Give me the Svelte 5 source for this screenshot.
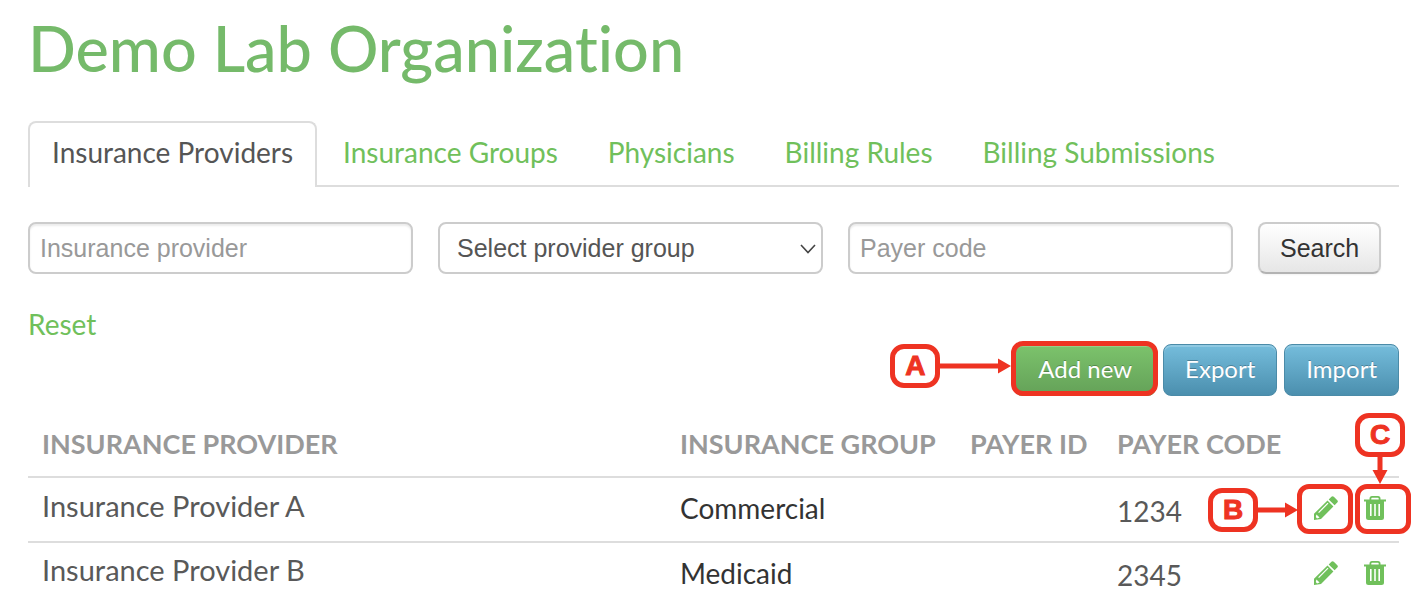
<script lang="ts">
  interface Provider {
    name: string;
    group: string;
    payerId: string;
    payerCode: string;
  }

  const tabs = [
    "Insurance Providers",
    "Insurance Groups",
    "Physicians",
    "Billing Rules",
    "Billing Submissions",
  ];

  const providers: Provider[] = [
    { name: "Insurance Provider A", group: "Commercial", payerId: "", payerCode: "1234" },
    { name: "Insurance Provider B", group: "Medicaid", payerId: "", payerCode: "2345" },
  ];

  let activeTab = $state(0);
  let providerName = $state("");
  let providerGroup = $state("");
  let payerCode = $state("");

  function reset(event: MouseEvent) {
    event.preventDefault();
    providerName = "";
    providerGroup = "";
    payerCode = "";
  }
</script>

{#snippet arrowRight(length: number)}
  <svg class="arrow" width={length} height="16" viewBox="0 0 {length} 16" aria-hidden="true">
    <path d="M0 5.5H{length - 13}V0.5L{length} 8L{length - 13} 15.5V10.5H0Z" fill="#ee3322" />
  </svg>
{/snippet}

<main>
  <h1>Demo Lab Organization</h1>

  <nav>
    {#each tabs as tab, i}
      <a
        href="#tab-{i}"
        class:active={i === activeTab}
        onclick={() => (activeTab = i)}>{tab}</a>
    {/each}
  </nav>

  <form class="filters" onsubmit={(e) => e.preventDefault()}>
    <input
      type="text"
      aria-label="Insurance provider"
      placeholder="Insurance provider"
      bind:value={providerName}
    />
    <div class="select-wrapper">
      <select aria-label="Provider group" bind:value={providerGroup}>
        <option value="">Select provider group</option>
        <option value="commercial">Commercial</option>
        <option value="medicaid">Medicaid</option>
      </select>
      <svg class="chevron" width="16" height="10" viewBox="0 0 16 10" aria-hidden="true">
        <path d="M1 1L8 8.5L15 1" fill="none" stroke="#444" stroke-width="1.6" />
      </svg>
    </div>
    <input
      type="text"
      aria-label="Payer code"
      placeholder="Payer code"
      bind:value={payerCode}
    />
    <button type="submit" class="btn">Search</button>
  </form>

  <a class="reset" href="#reset" onclick={reset}>Reset</a>

  <div class="actions">
    <div class="marked">
      <button type="button" class="btn success">Add new</button>
      <div class="frame frame-add"></div>
      <div class="callout callout-a">
        <span class="badge">A</span>
        {@render arrowRight(71)}
      </div>
    </div>
    <button type="button" class="btn info">Export</button>
    <button type="button" class="btn info">Import</button>
  </div>

  <table>
    <thead>
      <tr>
        <th>Insurance Provider</th>
        <th class="col-group">Insurance Group</th>
        <th class="col-id">Payer ID</th>
        <th class="col-code">Payer Code</th>
        <th class="col-tools" aria-label="Actions"></th>
      </tr>
    </thead>
    <tbody>
      {#each providers as provider, i}
        <tr>
          <td class="name">{provider.name}</td>
          <td>{provider.group}</td>
          <td>{provider.payerId}</td>
          <td class="code">{provider.payerCode}</td>
          <td>
            <div class="tools">
              <button type="button" class="icon" aria-label="Edit {provider.name}">
                <svg width="24" height="24" viewBox="0 0 24 24">
                  <path
                    fill="#70c05b"
                    d="M17.4 0.7Q18.6-0.4 19.8 0.7L23.3 4.2Q24.4 5.4 23.3 6.6L20.6 9.3L14.7 3.4Z M13.5 4.6L19.4 10.5L7 23L0 24V17.8Z"
                  />
                  <path d="M4.6 16.6L14 7.2" stroke="#fff" stroke-width="1.2" />
                  <path d="M2.4 18.6L4 20L5.6 21.6L3 22.4L1.8 21Z" fill="#fff" />
                </svg>
              </button>
              <button type="button" class="icon" aria-label="Delete {provider.name}">
                <svg width="22" height="24" viewBox="0 0 22 24">
                  <path
                    fill="#70c05b"
                    fill-rule="evenodd"
                    d="M5.5 3.5V2.5Q5.5 0 8 0H14Q16.5 0 16.5 2.5V3.5H22V5.5H20V21.5Q20 24 17.5 24H4.5Q2 24 2 21.5V5.5H0V3.5ZM7.3 3.5H14.7V2.6Q14.7 1.8 13.9 1.8H8.1Q7.3 1.8 7.3 2.6ZM6 8V20H7.6V8ZM10.2 8V20H11.8V8ZM14.4 8V20H16V8Z"
                  />
                </svg>
              </button>
              {#if i === 0}
                <div class="frame frame-edit"></div>
                <div class="frame frame-delete"></div>
                <div class="callout callout-b">
                  <span class="badge">B</span>
                  {@render arrowRight(40)}
                </div>
                <div class="callout callout-c">
                  <span class="badge">C</span>
                  <svg class="arrow" width="16" height="27" viewBox="0 0 16 27" aria-hidden="true">
                    <path d="M5.5 0V13H0.5L8 27L15.5 13H10.5V0Z" fill="#ee3322" />
                  </svg>
                </div>
              {/if}
            </div>
          </td>
        </tr>
      {/each}
    </tbody>
  </table>
</main>

<style>
  :global(body) {
    background: #fff;
    margin: 0;
  }

  main {
    color: #333;
    font-family: Lato, "Open Sans", sans-serif;
    font-size: 28px;
    line-height: 40px;
    padding: 8px 15px 0 28px;
  }

  h1 {
    color: #75ba6a;
    font-size: 63px;
    font-variant-ligatures: none;
    font-weight: 500;
    line-height: 80px;
    margin: 0 0 33px;
  }

  a {
    color: #70c05b;
    text-decoration: none;
  }

  nav {
    border-bottom: 2px solid #ddd;
    display: flex;
    gap: 2px;

    a {
      border: 2px solid transparent;
      border-bottom: none;
      border-radius: 8px 8px 0 0;
      line-height: 58px;
      margin-bottom: -2px;
      padding: 0 22px 6px;
      white-space: nowrap;
    }

    a.active {
      background: #fff;
      border-color: #ddd;
      color: #555;
    }
  }

  .filters {
    display: flex;
    gap: 25px;
    margin-top: 35px;

    input,
    .select-wrapper {
      flex: 0 1 385px;
      min-width: 0;
    }
  }

  input,
  select {
    appearance: none;
    background: #fff;
    border: 2px solid #ccc;
    border-radius: 8px;
    box-sizing: border-box;
    color: #555;
    font-family: "Liberation Sans", Arial, sans-serif;
    font-size: 25px;
    height: 52px;
    padding: 0 10px;
  }

  input {
    box-shadow: inset 0 2px 2px rgba(0, 0, 0, 0.08);
  }

  input::placeholder {
    color: #999;
    opacity: 1;
  }

  select {
    padding: 0 40px 0 17px;
    width: 100%;
  }

  .select-wrapper {
    position: relative;
  }

  .chevron {
    pointer-events: none;
    position: absolute;
    right: 7px;
    top: 22px;
  }

  .btn {
    background: linear-gradient(#fff, #e6e6e6);
    border: 2px solid #ccc;
    border-bottom-color: #b3b3b3;
    border-radius: 8px;
    box-shadow: 0 1px 2px rgba(0, 0, 0, 0.05);
    box-sizing: border-box;
    color: #333;
    font-family: "Liberation Sans", Arial, sans-serif;
    font-size: 25px;
    height: 52px;
    padding: 0 20px;
    white-space: nowrap;
  }

  .success,
  .info {
    border: 1px solid #4b8ba8;
    box-shadow: inset 0 2px 0 rgba(255, 255, 255, 0.2);
    color: #fff;
    font-family: Lato, "Open Sans", sans-serif;
    font-size: 24px;
    padding: 0 21px 4px;
    text-shadow: 0 -1px 0 rgba(0, 0, 0, 0.25);
  }

  .info {
    background: linear-gradient(#75bddc, #4b8fae);
  }

  .success {
    background: linear-gradient(#7cc36c, #64a158);
    border-color: #5c9a50;
    padding: 0 23px 4px;
  }

  .reset {
    display: block;
    margin-top: 30px;
    width: max-content;
  }

  .actions {
    display: flex;
    gap: 7px;
    justify-content: flex-end;
  }

  .marked {
    position: relative;
  }

  table {
    border-collapse: collapse;
    margin-top: 16px;
    table-layout: fixed;
    width: 100%;
  }

  th,
  td {
    border-bottom: 2px solid #ddd;
    box-sizing: border-box;
    height: 65px;
    padding: 0 0 0 14px;
    text-align: left;
    white-space: nowrap;
  }

  th {
    color: #999;
    font-size: 27px;
    font-weight: 700;
    text-transform: uppercase;
  }

  td {
    padding-bottom: 3px;
  }

  tbody tr:last-child td {
    border-bottom: none;
    height: 63px;
  }

  .col-group {
    width: 290px;
  }

  .col-id {
    width: 147px;
  }

  .col-code {
    width: 171px;
  }

  .col-tools {
    width: 125px;
  }

  .name,
  .code {
    color: #595959;
  }

  td.name {
    font-size: 29px;
    padding-bottom: 8px;
  }

  td.code {
    padding-bottom: 0;
    padding-top: 2px;
  }

  .tools {
    display: flex;
    justify-content: flex-end;
    position: relative;
  }

  .icon {
    align-items: center;
    background: none;
    border: none;
    display: flex;
    height: 48px;
    justify-content: center;
    padding: 0;
    width: 49px;
  }

  .frame {
    border: 5px solid #ee3322;
    border-radius: 12px;
    box-sizing: border-box;
    pointer-events: none;
    position: absolute;
  }

  .frame-add {
    inset: -3px -2px 0 -3px;
  }

  .frame-edit,
  .frame-delete {
    height: 50px;
    top: 0;
    width: 56px;
  }

  .frame-edit {
    right: 46px;
  }

  .frame-delete {
    right: -12px;
  }

  .callout {
    align-items: center;
    display: flex;
    position: absolute;
  }

  .callout-a {
    right: calc(100% + 3px);
    top: 0;
  }

  .callout-b {
    right: 101px;
    top: 4px;
  }

  .callout-c {
    bottom: 100%;
    flex-direction: column;
    right: -6px;
  }

  .badge {
    background: #fff;
    border: 5px solid #ee3322;
    border-radius: 14px;
    box-sizing: border-box;
    color: #ee3322;
    font-family: "Liberation Sans", Arial, sans-serif;
    font-size: 28px;
    font-weight: 700;
    height: 44px;
    line-height: 34px;
    text-align: center;
    width: 50px;
    -webkit-text-stroke: 1px #ee3322;
  }

  .arrow {
    display: block;
    flex: none;
  }
</style>
